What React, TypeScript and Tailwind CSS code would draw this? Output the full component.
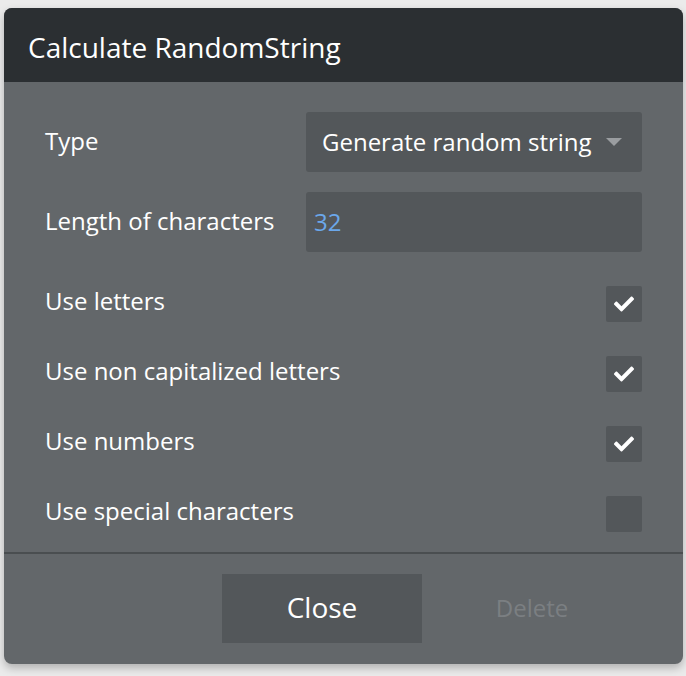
import React from "react";

const rows = [
  { label: "Use letters", checked: true },
  { label: "Use non capitalized letters", checked: true },
  { label: "Use numbers", checked: true },
  { label: "Use special characters", checked: false },
];

function Check() {
  return (
    <svg className="w-[20px] h-[20px]" viewBox="0 0 512 512" fill="white">
      <path d="M173.9 439.4L7.5 273c-10-10-10-26.2 0-36.2l36.2-36.2c10-10 26.2-10 36.2 0L192 312.7 432.1 72.6c10-10 26.2-10 36.2 0l36.2 36.2c10 10 10 26.2 0 36.2L210.1 439.4c-10 10-26.2 10-36.2 0z" />
    </svg>
  );
}

export default function App() {
  return (
    <div
      className="w-[686px] h-[676px] bg-[#ebebeb] pt-[8px] pl-[4px]"
      style={{ fontFamily: "'Open Sans', sans-serif" }}
    >
      <div className="w-[679px] rounded-[8px] overflow-hidden bg-[#63676a] shadow-[0_4px_8px_rgba(0,0,0,0.25)]">
        {/* Header */}
        <div className="h-[74px] bg-[#2b2f32] flex items-center pl-[24px]">
          <span className="text-[28px] text-white leading-none mt-[3px]">Calculate RandomString</span>
        </div>

        {/* Body */}
        <div className="pt-[30px] pb-[20px] pl-[41px] pr-[41px]">
          <div className="flex items-center justify-between h-[60px]">
            <span className="text-[24px] text-white leading-none -mt-[2px]">Type</span>
            <div className="w-[336px] h-[60px] bg-[#53575a] rounded-[3px] flex items-center justify-between pl-[16px] pr-[20px]">
              <span className="text-[24px] text-white leading-none">Generate random string</span>
              <svg className="w-[16px] h-[8px]" viewBox="0 0 16 8" fill="#9a9da0">
                <path d="M0 0h16L8 8z" />
              </svg>
            </div>
          </div>
          <div className="flex items-center justify-between h-[60px] mt-[20px]">
            <span className="text-[24px] text-white leading-none -mt-[3px]">Length of characters</span>
            <div className="w-[336px] h-[60px] bg-[#53575a] rounded-[3px] flex items-center pl-[8px]">
              <span className="text-[24px] text-[#6ba7ea] leading-none -mt-[1px]">32</span>
            </div>
          </div>
          <div className="flex flex-col gap-[34px] mt-[34px]">
            {rows.map((r) => (
              <div key={r.label} className="flex items-center justify-between h-[36px]">
                <span className="text-[24px] text-white leading-none -mt-[6px]">{r.label}</span>
                <div className="w-[36px] h-[36px] bg-[#53575a] rounded-[2px] flex items-center justify-center">
                  {r.checked && <Check />}
                </div>
              </div>
            ))}
          </div>
        </div>

        {/* Footer */}
        <div className="border-t-2 border-[#4a4e50] h-[112px] flex items-start pt-[20px] pl-[218px]">
          <button className="w-[200px] h-[69px] bg-[#53575a] text-white text-[28px] leading-none flex items-center justify-center">
            <span className="-mt-[3px]">Close</span>
          </button>
          <button className="w-[220px] h-[69px] text-[#7b7f82] text-[24px] leading-none flex items-center justify-center">
            <span className="-mt-[2px]">Delete</span>
          </button>
        </div>
      </div>
    </div>
  );
}
